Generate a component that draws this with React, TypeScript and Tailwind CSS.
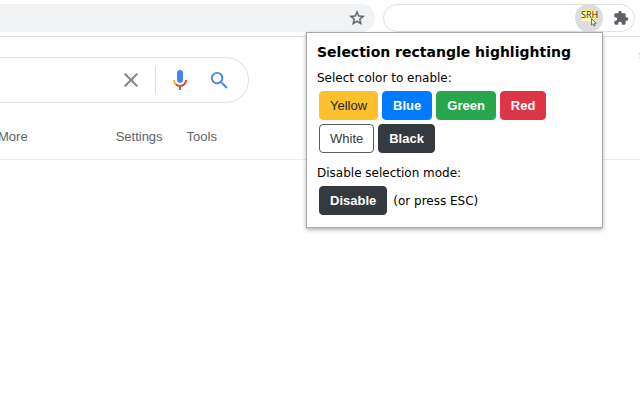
import React from "react";

function ColorButton({ className, children }: { className: string; children: React.ReactNode }) {
  return (
    <button
      type="button"
      className={`h-[29px] rounded-[4px] border px-[10px] font-['Liberation_Sans',Arial,sans-serif] text-[13px] leading-5 ${className}`}
    >
      {children}
    </button>
  );
}

function StarIcon() {
  return (
    <svg viewBox="0 0 24 24" className="size-[18px]" fill="#5f6368" stroke="#5f6368" strokeWidth="0.5">
      <path d="M22 9.24l-7.19-.62L12 2 9.19 8.63 2 9.24l5.46 4.73L5.82 21 12 17.27 18.18 21l-1.63-7.03L22 9.24zM12 15.4l-3.76 2.27 1-4.28-3.32-2.88 4.38-.38L12 6.1l1.71 4.04 4.38.38-3.32 2.88 1 4.28L12 15.4z" />
    </svg>
  );
}

function PuzzleIcon() {
  return (
    <svg viewBox="0 0 24 24" className="size-4" fill="#5f6368">
      <path d="M20.5 11H19V7c0-1.1-.9-2-2-2h-4V3.5a2.5 2.5 0 0 0-5 0V5H4c-1.1 0-1.99.9-1.99 2v3.8H3.5c1.49 0 2.7 1.21 2.7 2.7s-1.21 2.7-2.7 2.7H2V20c0 1.1.9 2 2 2h3.8v-1.5c0-1.49 1.21-2.7 2.7-2.7s2.7 1.21 2.7 2.7V22H17c1.1 0 2-.9 2-2v-4h1.5a2.5 2.5 0 0 0 0-5z" />
    </svg>
  );
}

function ClearIcon() {
  return (
    <svg viewBox="0 0 24 24" className="size-6" fill="#80868b">
      <path d="M19 6.41L17.59 5 12 10.59 6.41 5 5 6.41 10.59 12 5 17.59 6.41 19 12 13.41 17.59 19 19 17.59 13.41 12z" />
    </svg>
  );
}

function MicIcon() {
  return (
    <svg viewBox="0 0 24 24" className="size-6">
      <path fill="#4285f4" d="M12 15c1.66 0 3-1.31 3-2.97V4.98C15 3.32 13.66 2 12 2S9 3.32 9 4.98v7.05C9 13.69 10.34 15 12 15z" />
      <path fill="#34a853" d="M11 18.92h2V22h-2z" />
      <path fill="#fbbc05" d="M7 12H5c0 1.93.78 3.68 2.05 4.95l1.41-1.41A4.98 4.98 0 0 1 7 12z" />
      <path fill="#ea4335" d="M12 16.93a4.97 4.97 0 0 1-3.54-1.4l-1.41 1.41A6.98 6.98 0 0 0 12.01 19c3.87 0 6.99-3.13 6.99-7h-2c0 2.76-2.23 4.93-5 4.93z" />
    </svg>
  );
}

function SearchIcon() {
  return (
    <svg viewBox="0 0 24 24" className="size-[23px]" fill="#4285f4">
      <path d="M15.5 14h-.79l-.28-.27A6.47 6.47 0 0 0 16 9.5 6.5 6.5 0 1 0 9.5 16c1.61 0 3.09-.59 4.23-1.57l.27.28v.79l5 4.99L20.49 19l-4.99-5zm-6 0C7.01 14 5 11.99 5 9.5S7.01 5 9.5 5 14 7.01 14 9.5 11.99 14 9.5 14z" />
    </svg>
  );
}

function ExtensionIcon() {
  return (
    <svg viewBox="0 0 18 18" className="size-[18px] overflow-visible">
      <rect x="1.5" y="1.5" width="13" height="11" fill="#fbf9b4" stroke="#f6f06a" />
      <text x="1" y="9" fontSize="9" fontFamily="'Open Sans', sans-serif" fill="#2b2b20">
        SRH
      </text>
      <path d="M11.5 9.5v6.4l1.4-1.1 1.1 2.2 1.2-.6-1.1-2.1h1.9z" fill="#fff" stroke="#505050" strokeWidth="0.8" />
    </svg>
  );
}

function Toolbar() {
  return (
    <header className="flex h-[37px] items-start gap-2 border-b border-[#dadce0] pt-1 pr-[5px]">
      <div className="flex h-7 min-w-0 flex-1 items-center rounded-r-full bg-[#f1f3f4] pr-[9px]">
        <input type="text" aria-label="Address" className="min-w-0 flex-1 bg-transparent outline-none" />
        <button type="button" aria-label="Bookmark this page">
          <StarIcon />
        </button>
      </div>
      <div className="flex h-7 w-[252px] items-center justify-end gap-[10px] rounded-full border border-[#dfe1e3] pr-[5px]">
        <button
          type="button"
          aria-label="Selection rectangle highlighting"
          className="flex size-7 items-center justify-center rounded-full bg-[#dddddf]"
        >
          <ExtensionIcon />
        </button>
        <button type="button" aria-label="Extensions">
          <PuzzleIcon />
        </button>
      </div>
    </header>
  );
}

function SearchPage() {
  return (
    <main className="border-b border-[#ebebeb] pt-5">
      <form className="flex h-[46px] w-[249px] items-center rounded-r-full border border-l-0 border-[#dfe1e5] pr-[17px]">
        <input type="text" aria-label="Search" className="min-w-0 flex-1 bg-transparent outline-none" />
        <button type="button" aria-label="Clear" className="mr-3">
          <ClearIcon />
        </button>
        <span className="mr-3 h-7 w-px bg-[#dadce0]" />
        <button type="button" aria-label="Search by voice" className="mr-4">
          <MicIcon />
        </button>
        <button type="submit" aria-label="Search">
          <SearchIcon />
        </button>
      </form>
      <nav className="-ml-[2px] flex h-14 items-center pt-3 text-[13px] leading-5 text-[#5f6368]">
        <a href="#more" className="mr-[88px]">More</a>
        <a href="#settings" className="mr-6">Settings</a>
        <a href="#tools">Tools</a>
      </nav>
    </main>
  );
}

function Popup() {
  return (
    <section className="absolute top-8 right-[37px] w-[297px] border border-[#a8a8a8] bg-white px-[10px] pt-[9px] pb-3 font-['DejaVu_Sans',Verdana,sans-serif] text-[12px] leading-5 text-black shadow-[0_2px_4px_rgba(0,0,0,0.3)]">
      <h1 className="text-[14px] leading-5 font-bold whitespace-nowrap">Selection rectangle highlighting</h1>
      <p className="mt-[6px]">Select color to enable:</p>
      <div className="mt-[3px] flex flex-wrap gap-1 px-[2px]">
        <ColorButton className="border-[#ffc02e] bg-[#ffc02e] text-[#212529]">Yellow</ColorButton>
        <ColorButton className="border-[#007bff] bg-[#007bff] font-bold text-white">Blue</ColorButton>
        <ColorButton className="border-[#28a74d] bg-[#28a74d] font-bold text-white">Green</ColorButton>
        <ColorButton className="border-[#dc3545] bg-[#dc3545] font-bold text-white">Red</ColorButton>
        <ColorButton className="border-[#5a5d60] bg-white text-[#343a40]">White</ColorButton>
        <ColorButton className="border-[#343a40] bg-[#343a40] font-bold text-white">Black</ColorButton>
      </div>
      <p className="mt-[10px]">Disable selection mode:</p>
      <div className="mt-[3px] flex items-center gap-[6px] pl-[2px]">
        <ColorButton className="border-[#343a40] bg-[#343a40] font-bold text-white">Disable</ColorButton>
        <span>(or press ESC)</span>
      </div>
    </section>
  );
}

export default function App() {
  return (
    <div className="relative min-h-screen overflow-hidden bg-white font-['Liberation_Sans',Arial,sans-serif]">
      <Toolbar />
      <SearchPage />
      <Popup />
      <span className="absolute top-[45px] -right-[5px] text-[13px] leading-5 text-[#8fdcc0]">s</span>
    </div>
  );
}
